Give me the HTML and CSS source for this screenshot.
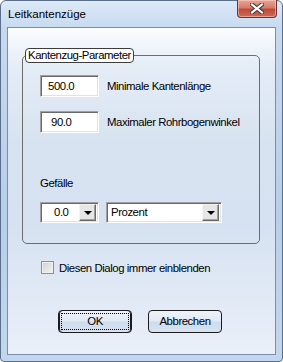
FILE: index.html
```html
<html>
    <head>
        <link rel="stylesheet" href="styles.css">
    </head>
    <body>
        <div class="window">
            <div class="titlebar">
                <span class="title">Leitkantenzüge</span>
                <div class="close">
                    <svg width="14" height="11" viewBox="0 0 14 11">
                        <path d="M2 1.5 L12 9.5 M12 1.5 L2 9.5" stroke="#3a3a3a" stroke-width="4.2" stroke-linecap="square"/>
                        <path d="M2 1.5 L12 9.5 M12 1.5 L2 9.5" stroke="#ffffff" stroke-width="2.2" stroke-linecap="square"/>
                    </svg>
                </div>
            </div>
            <div class="client">
                <fieldset class="group">
                    <legend>Kantenzug-Parameter</legend>
                    <div class="row">
                        <div class="edit">500.0</div>
                        <span class="label">Minimale Kantenlänge</span>
                    </div>
                    <div class="row second">
                        <div class="edit indent">90.0</div>
                        <span class="label">Maximaler Rohrbogenwinkel</span>
                    </div>
                    <div class="caption">Gefälle</div>
                    <div class="row combos">
                        <div class="combo small">
                            <span class="value centered">0.0</span>
                            <div class="drop"><b></b></div>
                        </div>
                        <div class="combo wide">
                            <span class="value">Prozent</span>
                            <div class="drop"><b></b></div>
                        </div>
                    </div>
                </fieldset>
                <div class="check">
                    <span class="box"></span>
                    <span>Diesen Dialog immer einblenden</span>
                </div>
                <div class="buttons">
                    <div class="btn default"><span class="focus">OK</span></div>
                    <div class="btn">Abbrechen</div>
                </div>
            </div>
        </div>
    </body>
</html>
```

FILE: styles.css
```css
*{
    box-sizing: border-box;
}
body{
    margin: 0px;
    font-family: 'Liberation Sans', Arial, sans-serif;
    font-size: 11.4px;
    letter-spacing: -0.45px;
    color: #000;
}
.window{
    width: 283px;
    height: 362px;
    border: 1px solid #5b6f8c;
    border-radius: 6px 6px 4px 4px;
    background: linear-gradient(180deg, #dde9f7 0%, #c5d9ef 8%, #b8cfe9 60%, #c2d7ee 100%);
    padding: 0px 6px 6px 6px;
    display: flex;
    flex-direction: column;
}
.titlebar{
    height: 26px;
    display: flex;
    justify-content: space-between;
    align-items: flex-start;
}
.title{
    padding-top: 7px;
    padding-left: 1px;
    line-height: 13px;
    font-size: 11.5px;
    letter-spacing: 0px;
}
.close{
    width: 40px;
    height: 18px;
    margin-top: -1px;
    margin-right: -1px;
    border: 1px solid #6b3434;
    border-top: none;
    border-radius: 0px 0px 4px 4px;
    background: linear-gradient(180deg, #e9a596 0%, #d77c6c 45%, #c04a3a 55%, #cd6a58 100%);
    box-shadow: inset 0px 0px 0px 1px rgba(255,220,210,0.5);
    display: flex;
    align-items: center;
    justify-content: center;
}
.client{
    height: 328px;
    border: 1px solid #7b8ea8;
    background: linear-gradient(180deg, #fbfcfe 0%, #e4ecf6 12%, #d8e3f1 35%, #d6e2f1 60%, #e2eaf6 85%, #eaf0f9 100%);
    display: flex;
    flex-direction: column;
}
.group{
    margin: 20px 0px 0px 14px;
    width: 238px;
    height: 196px;
    border: 1px solid #6d6d6d;
    border-radius: 5px;
    padding: 12px 0px 0px 17px;
    display: flex;
    flex-direction: column;
}
.group legend{
    margin-left: -15px;
    padding: 0px 2px 0px 2px;
    border: 1px solid #3c3c3c;
    border-radius: 4px;
    background: #fff;
    line-height: 13px;
}
.row{
    display: flex;
    align-items: center;
}
.second{
    margin-top: 14px;
}
.edit, .combo{
    background: #fff;
    border: 1px solid;
    border-color: #a0a0a0 #ffffff #ffffff #a0a0a0;
    box-shadow: inset 1px 1px 0px #696969, inset -1px -1px 0px #e3e3e3;
}
.edit{
    width: 59px;
    height: 22px;
    padding: 4px 0px 0px 7px;
    line-height: 13px;
}
.edit.indent{
    padding-left: 10px;
}
.label{
    margin-left: 8px;
}
.caption{
    margin-top: 41px;
    line-height: 18px;
}
.combos{
    margin-top: 10px;
    gap: 7px;
}
.combo{
    height: 21px;
    display: flex;
    align-items: center;
    justify-content: space-between;
    padding: 2px 2px 2px 4px;
}
.small{
    width: 59px;
}
.wide{
    width: 116px;
}
.value{
    line-height: 13px;
}
.value.centered{
    padding-left: 9px;
}
.drop{
    width: 17px;
    height: 17px;
    background: #e6e6e6;
    border: 1px solid;
    border-color: #f4f4f4 #6a6a6a #6a6a6a #f4f4f4;
    box-shadow: inset -1px -1px 0px #a0a0a0;
    display: flex;
    align-items: center;
    justify-content: center;
}
.drop b{
    width: 0px;
    height: 0px;
    border-left: 4px solid transparent;
    border-right: 4px solid transparent;
    border-top: 4px solid #000;
    margin-top: 1px;
}
.check{
    margin: 17px 0px 0px 33px;
    display: flex;
    align-items: center;
    gap: 5px;
}
.box{
    width: 13px;
    height: 13px;
    border: 1px solid #8f8f8f;
    background: linear-gradient(135deg, #cfcfcf 0%, #e6e6e6 60%, #f4f4f4 100%);
    box-shadow: inset 0px 0px 0px 1px #f0f0f0;
}
.buttons{
    margin: 36px 0px 0px 50px;
    display: flex;
    gap: 16px;
}
.btn{
    width: 74px;
    height: 23px;
    border: 1px solid #1c1c1c;
    border-radius: 4px;
    background: linear-gradient(180deg, #eef3fa 0%, #e2eaf5 45%, #cfdcec 55%, #d8e3f1 100%);
    display: flex;
    align-items: center;
    justify-content: center;
    line-height: 13px;
}
.btn.default{
    box-shadow: inset 1px 0px 0px #1c1c1c, inset -1px 0px 0px #1c1c1c;
    padding: 2px;
}
.focus{
    flex: 1;
    align-self: stretch;
    border: 1px dotted #000;
    display: flex;
    align-items: center;
    justify-content: center;
}
```
